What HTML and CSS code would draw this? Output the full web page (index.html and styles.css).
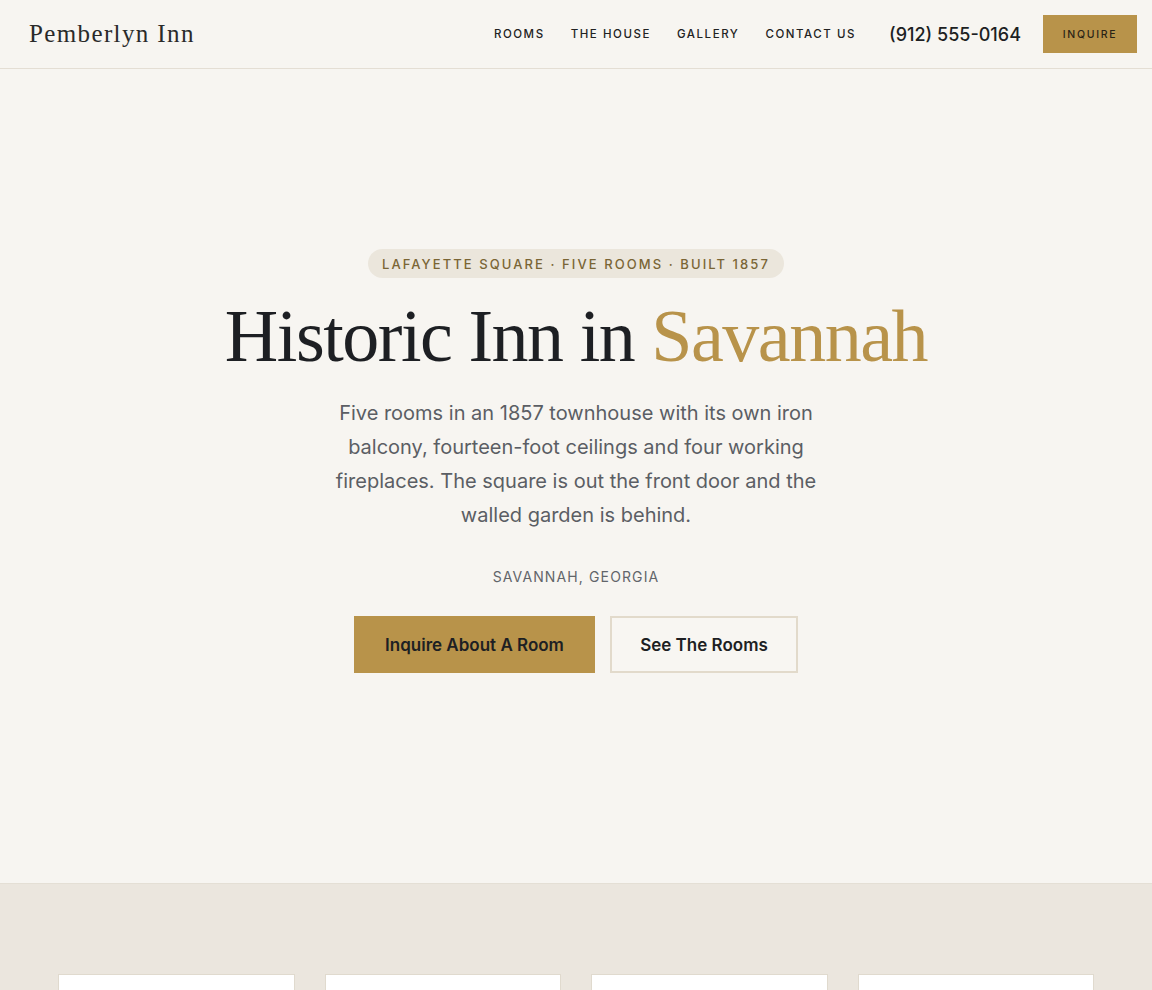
FILE: index.html
```html
<!DOCTYPE html>
<html lang="en">
<head>
<meta charset="utf-8">
<title>Pemberlyn Inn</title>
<link rel="stylesheet" href="styles.css">
</head>
<body>
<header class="site-header">
  <a class="logo" href="#">Pemberlyn Inn</a>
  <nav class="nav">
    <a href="#">Rooms</a>
    <a href="#">The House</a>
    <a href="#">Gallery</a>
    <a href="#">Contact Us</a>
  </nav>
  <a class="phone" href="#">(912) 555-0164</a>
  <a class="btn-inquire" href="#">Inquire</a>
</header>
<main>
  <section class="hero">
    <div class="pill">Lafayette Square · Five Rooms · Built 1857</div>
    <h1 class="title">Historic Inn in <span class="accent">Savannah</span></h1>
    <p class="lede">Five rooms in an 1857 townhouse with its own iron balcony, fourteen-foot ceilings and four working fireplaces. The square is out the front door and the walled garden is behind.</p>
    <p class="place">Savannah, Georgia</p>
    <div class="actions">
      <a class="btn btn-primary" href="#">Inquire About A Room</a>
      <a class="btn btn-outline" href="#">See The Rooms</a>
    </div>
  </section>
  <section class="features">
    <div class="card"></div>
    <div class="card"></div>
    <div class="card"></div>
    <div class="card"></div>
  </section>
</main>
</body>
</html>
```
FILE: styles.css
```css
* { box-sizing: border-box; }
html, body { margin: 0; padding: 0; }
body {
  background: #f7f5f1;
  font-family: Inter, "Noto Sans", sans-serif;
  color: #1d1f23;
  overflow: hidden;
}
a { text-decoration: none; color: inherit; }

.site-header {
  height: 69px;
  display: flex;
  align-items: center;
  padding: 0 15px 0 29px;
  border-bottom: 1px solid #e4ded4;
  background: #f7f5f1;
}
.logo {
  font-family: "Liberation Serif", "DejaVu Serif", serif;
  font-size: 25px;
  letter-spacing: 0.055em;
  color: #2a2a2a;
  margin-right: auto;
}
.nav {
  display: flex;
  gap: 26px;
}
.nav a {
  font-size: 11.5px;
  font-weight: 500;
  letter-spacing: 0.135em;
  text-transform: uppercase;
  color: #222;
}
.phone {
  margin-left: 33px;
  font-size: 18px;
  font-weight: 500;
  color: #1d1f23;
}
.btn-inquire {
  margin-left: 22px;
  width: 94px;
  height: 38px;
  display: flex;
  align-items: center;
  justify-content: center;
  background: #b8934a;
  font-size: 10.5px;
  font-weight: 500;
  letter-spacing: 0.16em;
  text-transform: uppercase;
  color: #2a2316;
}

.hero {
  height: 814px;
  display: flex;
  flex-direction: column;
  align-items: center;
  padding-top: 180px;
  text-align: center;
}
.pill {
  height: 29px;
  padding: 0 14px;
  display: flex;
  align-items: center;
  border-radius: 999px;
  background: #ebe6dc;
  color: #7a6535;
  font-size: 13px;
  font-weight: 500;
  letter-spacing: 0.16em;
  text-transform: uppercase;
}
.title {
  margin: 18px 0 0;
  font-family: "Liberation Serif", "DejaVu Serif", serif;
  font-weight: 400;
  font-size: 74px;
  line-height: 1.1;
  letter-spacing: -0.02em;
  color: #1d1f23;
}
.accent { color: #b8934a; }
.lede {
  margin: 19px 0 0;
  max-width: 484px;
  font-size: 20px;
  line-height: 34px;
  color: #5b5e64;
}
.place {
  margin: 36px 0 0;
  font-size: 14px;
  letter-spacing: 0.08em;
  text-transform: uppercase;
  color: #62656a;
}
.actions {
  margin-top: 31px;
  display: flex;
  gap: 15px;
}
.btn {
  height: 57px;
  display: flex;
  align-items: center;
  justify-content: center;
  font-size: 17px;
  font-weight: 600;
  color: #1d1f23;
}
.btn-primary {
  width: 241px;
  background: #b8934a;
}
.btn-outline {
  width: 188px;
  border: 2px solid #e2dacb;
  background: #f8f6f2;
}

.features {
  background: #ebe6de;
  border-top: 1px solid #e4dfd5;
  padding: 90px 58px 0;
  display: grid;
  grid-template-columns: repeat(4, 1fr);
  gap: 30px;
  height: 400px;
}
.card {
  background: #fff;
  border: 1px solid #e0dace;
  height: 200px;
}
```
